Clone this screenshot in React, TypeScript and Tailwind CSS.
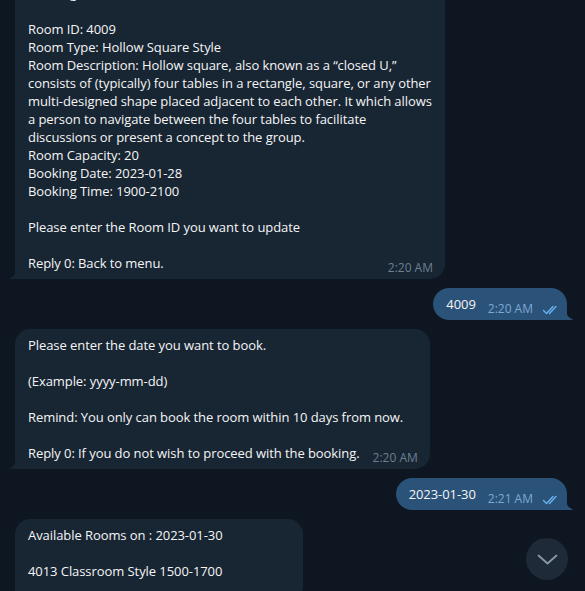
import React from 'react';

const font = { fontFamily: '"Open Sans", "Noto Sans", sans-serif' };

function TailLeft({ color }: { color: string }) {
    return (
        <svg className="absolute bottom-0 -left-[6px]" width="7" height="12" viewBox="0 0 7 12">
            <path d="M7 0 C7 6 5 9.5 1 11 C0 11.4 0.2 12 1 12 H7 Z" fill={color} />
        </svg>
    );
}

function TailRight({ color }: { color: string }) {
    return (
        <svg className="absolute bottom-0 -right-[6px]" width="7" height="12" viewBox="0 0 7 12">
            <path d="M0 0 C0 6 2 9.5 6 11 C7 11.4 6.8 12 6 12 H0 Z" fill={color} />
        </svg>
    );
}

function DoubleCheck() {
    return (
        <svg width="18" height="10" viewBox="0 0 18 10" fill="none" stroke="#6ab2f2" strokeWidth="1.4" strokeLinecap="round" strokeLinejoin="round">
            <path d="M1.5 5.5 L4.5 8.5 L11 1.5" />
            <path d="M7.5 8.5 L14 1.5" />
        </svg>
    );
}

interface IncomingProps {
    lines: string[];
    last: string;
    time?: string;
    className?: string;
}

function Incoming({ lines, last, time, className }: IncomingProps) {
    return (
        <div className={`relative self-start bg-[#182533] rounded-[15px] rounded-bl-none pl-[13px] pr-[12px] pt-[7px] pb-[3px] ${className ?? 'w-fit'}`}>
            {lines.map((line, i) => (
                <div key={i} className="h-[18px] leading-[18px] text-[13px] tracking-[-0.07px] text-[#f5f5f5] whitespace-pre">{line}</div>
            ))}
            <div className="flex justify-between gap-[13px]">
                <span className="h-[18px] leading-[18px] text-[13px] tracking-[-0.07px] text-[#f5f5f5] whitespace-pre">{last}</span>
                {time && <span className="pt-[6px] leading-[16px] text-[12px] text-[#6d7f8f] whitespace-nowrap">{time}</span>}
            </div>
            <TailLeft color="#182533" />
        </div>
    );
}

function Outgoing({ text, time }: { text: string, time: string }) {
    return (
        <div className="relative self-end flex items-start bg-[#2b5278] rounded-[16px] rounded-br-none pl-[13px] pr-[7px] pt-[7px] pb-[3px]">
            <span className="leading-[18px] text-[13px] tracking-[-0.07px] text-[#f5f5f5]">{text}</span>
            <span className="ml-[12px] pt-[6px] leading-[16px] text-[12px] text-[#7da8d3]">{time}</span>
            <span className="ml-[9px] pt-[10px]"><DoubleCheck /></span>
            <TailRight color="#2b5278" />
        </div>
    );
}

export default function App() {
    return (
        <div className="relative w-[585px] h-[591px] overflow-hidden bg-[#0e1621]" style={font}>
            <div className="flex flex-col gap-[9px] pl-[15px] pr-[18px] -mt-[23px]">
                <Incoming
                    className="w-[430px]"
                    lines={[
                        'Booking Details:',
                        '',
                        'Room ID: 4009',
                        'Room Type: Hollow Square Style',
                        'Room Description: Hollow square, also known as a \u201Cclosed U,\u201D',
                        'consists of (typically) four tables in a rectangle, square, or any other',
                        'multi-designed shape placed adjacent to each other. It which allows',
                        'a person to navigate between the four tables to facilitate',
                        'discussions or present a concept to the group.',
                        'Room Capacity: 20',
                        'Booking Date: 2023-01-28',
                        'Booking Time: 1900-2100',
                        '',
                        'Please enter the Room ID you want to update',
                        '',
                    ]}
                    last="Reply 0: Back to menu."
                    time="2:20 AM"
                />
                <Outgoing text="4009" time="2:20 AM" />
                <Incoming
                    lines={[
                        'Please enter the date you want to book.',
                        '',
                        '(Example: yyyy-mm-dd)',
                        '',
                        'Remind: You only can book the room within 10 days from now.',
                        '',
                    ]}
                    last="Reply 0: If you do not wish to proceed with the booking."
                    time="2:20 AM"
                />
                <Outgoing text="2023-01-30" time="2:21 AM" />
                <Incoming
                    className="w-[288px]"
                    lines={[
                        'Available Rooms on : 2023-01-30',
                        '',
                        '4013 Classroom Style 1500-1700',
                    ]}
                    last=""
                />
            </div>
            <button className="absolute left-[526px] top-[538px] w-[42px] h-[42px] rounded-full bg-[#1e2a37] flex items-center justify-center">
                <svg width="21" height="11" viewBox="0 0 21 11" fill="none" stroke="#8797a8" strokeWidth="1.8" strokeLinecap="round" strokeLinejoin="round">
                    <path d="M1.5 1.5 L10.5 9.5 L19.5 1.5" />
                </svg>
            </button>
        </div>
    );
}
